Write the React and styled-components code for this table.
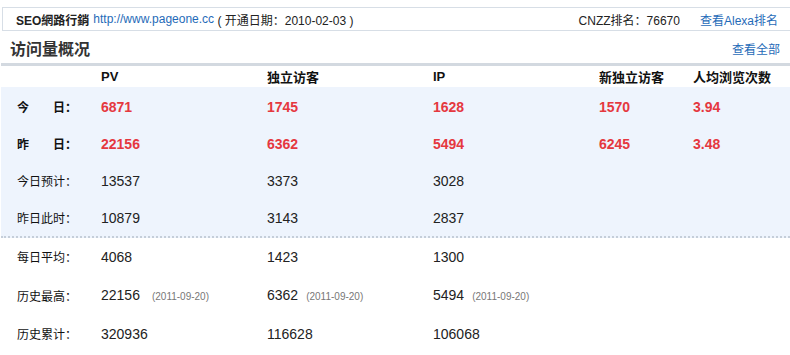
import React from 'react';
import styled, { createGlobalStyle } from 'styled-components';

const GlobalStyle = createGlobalStyle`
  body {
    margin: 0;
    background: #fff;
    font-family: "Liberation Sans", Arial, "Noto Sans CJK SC", sans-serif;
    font-size: 12px;
    color: #222;
  }
`;

const Page = styled.div`
  width: 790px;
  padding: 7px 0 0 1px;
  box-sizing: border-box;
  overflow: hidden;
`;

const InfoBar = styled.div`
  display: flex;
  align-items: center;
  justify-content: space-between;
  height: 22px;
  margin-left: 1px;
  padding: 0 12px 0 13px;
  border: 1px solid #d7dee6;
  border-right: none;
  font-size: 12px;
`;

const InfoLeft = styled.div`
  display: flex;
  align-items: center;
  white-space: pre;
`;

const InfoRight = styled.div`
  display: flex;
  align-items: center;
  gap: 20px;
`;

const SiteName = styled.b`
  font-family: "Liberation Sans", Arial, "Noto Sans CJK TC", sans-serif;
  margin-right: 4px;
`;

const Link = styled.a`
  color: #1f6bb8;
  text-decoration: none;
  cursor: pointer;
`;

const TitleRow = styled.div`
  display: flex;
  align-items: center;
  justify-content: space-between;
  height: 32px;
  padding: 2px 10px 0 9px;
  box-sizing: border-box;
`;

const Title = styled.h2`
  margin: 0;
  font-size: 16px;
  font-weight: 600;
  color: #333;
  font-family: "Noto Sans CJK SC", sans-serif;
`;

const Table = styled.div`
  border-top: 3px solid #d3d9e0;
`;

const Row = styled.div`
  display: grid;
  grid-template-columns: 100px 166px 166px 166px 94px 1fr;
  align-items: center;
  height: ${({ h }) => h}px;
`;

const HeadCell = styled.div`
  font-size: 13px;
  font-weight: bold;
  color: #111;
  font-family: "Liberation Sans", Arial, "Noto Sans CJK SC", sans-serif;
`;

const Highlight = styled.div`
  background: #eef4fd;
  padding-top: 1px;
  border-bottom: 2px dotted #c5ced9;
`;

const Label = styled.div`
  padding-left: 16px;
  font-size: 12px;
  font-weight: ${({ strong }) => (strong ? 'bold' : 'normal')};
  color: #111;
  font-family: "Noto Sans CJK SC", sans-serif;
  white-space: pre;
`;

const Value = styled.div`
  font-size: 14px;
  font-weight: ${({ hot }) => (hot ? 'bold' : 'normal')};
  color: ${({ hot }) => (hot ? '#e5383f' : '#222')};
  white-space: nowrap;
`;

const DateNote = styled.span`
  font-size: 10px;
  color: #777;
  font-weight: normal;
  margin-left: ${({ gap }) => gap}px;
`;

const headers = ['', 'PV', '独立访客', 'IP', '新独立访客', '人均浏览次数'];

const topRows = [
  { label: '今　　日：', strong: true, hot: true, values: ['6871', '1745', '1628', '1570', '3.94'] },
  { label: '昨　　日：', strong: true, hot: true, values: ['22156', '6362', '5494', '6245', '3.48'] },
  { label: '今日预计：', values: ['13537', '3373', '3028'] },
  { label: '昨日此时：', values: ['10879', '3143', '2837'] }
];

const bottomRows = [
  { label: '每日平均：', h: 37, values: ['4068', '1423', '1300'] },
  {
    label: '历史最高：',
    h: 40,
    values: ['22156', '6362', '5494'],
    dates: [{ d: '(2011-09-20)', gap: 12 }, { d: '(2011-09-20)', gap: 8 }, { d: '(2011-09-20)', gap: 8 }]
  },
  { label: '历史累计：', h: 37, values: ['320936', '116628', '106068'] }
];

function StatRow ({ row, h }) {
  const cells = [0, 1, 2, 3, 4].map(i => row.values[i]);
  return (
    <Row h={h}>
      <Label strong={row.strong}>{row.label}</Label>
      {cells.map((v, i) => (
        <Value key={i} hot={row.hot}>
          {v}
          {row.dates && row.dates[i] && (
            <DateNote gap={row.dates[i].gap}>{row.dates[i].d}</DateNote>
          )}
        </Value>
      ))}
    </Row>
  );
}

export default function App () {
  return (
    <Page>
      <GlobalStyle />
      <InfoBar>
        <InfoLeft>
          <SiteName>SEO網路行銷</SiteName>
          <Link>http://www.pageone.cc</Link>
          <span> ( 开通日期：2010-02-03 )</span>
        </InfoLeft>
        <InfoRight>
          <span>CNZZ排名：76670</span>
          <Link>查看Alexa排名</Link>
        </InfoRight>
      </InfoBar>
      <TitleRow>
        <Title>访问量概况</Title>
        <Link>查看全部</Link>
      </TitleRow>
      <Table>
        <Row h={21}>
          {headers.map((t, i) => <HeadCell key={i}>{t}</HeadCell>)}
        </Row>
        <Highlight>
          {topRows.map(r => <StatRow key={r.label} row={r} h={37} />)}
        </Highlight>
        {bottomRows.map(r => <StatRow key={r.label} row={r} h={r.h} />)}
      </Table>
    </Page>
  );
}
